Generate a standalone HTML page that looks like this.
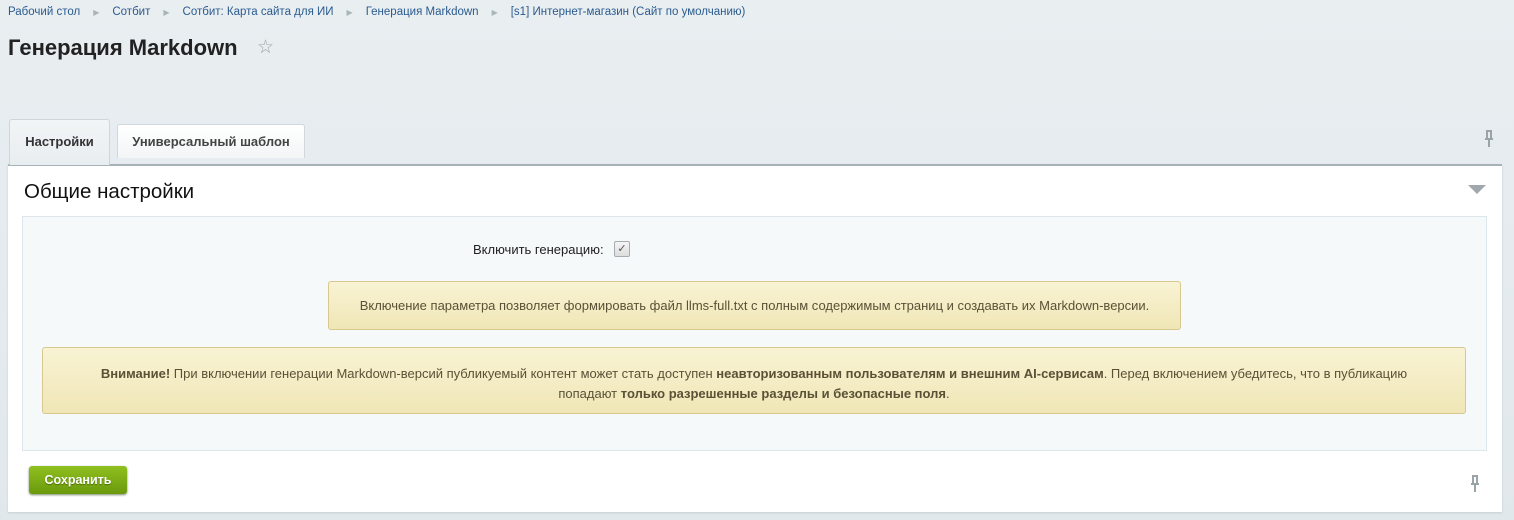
<!DOCTYPE html>
<html><head><meta charset="utf-8"><style>
body{margin:0;width:1514px;height:520px;background:linear-gradient(#e9eef1,#e1e8ec);font-family:"Liberation Sans",sans-serif;position:relative;overflow:hidden}
.a{position:absolute}
.bc{top:6px;left:8px;font-size:11.5px;color:#2a5b8f;white-space:nowrap;letter-spacing:0px}
.bc span.s{color:#a9b4bb;font-size:8px;margin:0 13px 0 13px}
h1{position:absolute;left:8px;top:35px;margin:0;font-size:22px;font-weight:bold;color:#222;letter-spacing:0px}
.tab{position:absolute;font-size:13px;font-weight:bold;color:#333;box-sizing:border-box;text-align:center}
.panel{left:8px;top:164px;width:1494px;height:348px;background:#fff;border-top:2px solid #a7b2b8;box-shadow:0 1px 2px #c5cfd4;box-sizing:border-box}
.inner{left:22px;top:216px;width:1465px;height:235px;background:#f5f9fa;border:1px solid #dce6eb;box-sizing:border-box}
.box{background:linear-gradient(#f8f3d4,#f0e6b6);border:1px solid #d6c88e;border-radius:3px;box-sizing:border-box;color:#5a5136;font-size:13px;text-align:center}
</style></head><body>
<div class="a bc">Рабочий стол<span class="s">▶</span>Сотбит<span class="s">▶</span>Сотбит: Карта сайта для ИИ<span class="s">▶</span>Генерация Markdown<span class="s">▶</span>[s1] Интернет-магазин (Сайт по умолчанию)</div>
<h1>Генерация Markdown</h1>
<div class="a" style="left:257px;top:36px;font-size:19px;color:#9aa4aa">☆</div>
<div class="tab" style="left:9px;top:119px;width:101px;height:46px;background:linear-gradient(#f2f5f6,#e8edf0);border:1px solid #cdd6db;border-bottom:none;border-radius:3px 3px 0 0;line-height:44px;z-index:2">Настройки</div>
<div class="tab" style="left:117px;top:124px;width:188px;height:34px;background:linear-gradient(#fff,#f3f5f6);border:1px solid #cfd8dc;border-bottom:none;border-radius:3px 3px 0 0;line-height:34px;color:#444">Универсальный шаблон</div>
<svg class="a" style="left:1483px;top:130px" width="12" height="18" viewBox="0 0 12 18"><path d="M3 1h6M4 1v7M8 1v7M2 9h8M6 9v8" stroke="#9aa3a8" stroke-width="2" fill="none"/></svg>
<div class="a panel"></div>
<div class="a" style="left:24px;top:180px;font-size:20.5px;color:#111">Общие настройки</div>
<svg class="a" style="left:1468px;top:185px" width="18" height="10"><path d="M0 0h18L9 9z" fill="#a0a8ad"/></svg>
<div class="a inner"></div>
<div class="a" style="left:473px;top:242px;font-size:13px;color:#222">Включить генерацию:</div>
<div class="a" style="left:614px;top:241px;width:14px;height:14px;border:1px solid #a5adb2;border-radius:2px;background:linear-gradient(#f5f5f5,#ddd);font-size:11px;line-height:14px;text-align:center;color:#555">✓</div>
<div class="a box" style="left:328px;top:281px;width:853px;height:49px;line-height:47px">Включение параметра позволяет формировать файл llms-full.txt с полным содержимым страниц и создавать их Markdown-версии.</div>
<div class="a box" style="left:42px;top:347px;width:1424px;height:67px;padding-top:16px;line-height:20px"><b>Внимание!</b> При включении генерации Markdown-версий публикуемый контент может стать доступен <b>неавторизованным пользователям и внешним AI-сервисам</b>. Перед включением убедитесь, что в публикацию<br>попадают <b>только разрешенные разделы и безопасные поля</b>.</div>
<div class="a" style="left:29px;top:466px;width:98px;height:28px;border-radius:3px;background:linear-gradient(#90bf1f,#6a9a0c);box-shadow:0 1px 2px #7a8a6a;color:#fff;font-weight:bold;font-size:12.5px;text-align:center;line-height:28px;text-shadow:0 1px 1px #4a6a05">Сохранить</div>
<svg class="a" style="left:1469px;top:475px" width="12" height="18" viewBox="0 0 12 18"><path d="M3 1h6M4 1v7M8 1v7M2 9h8M6 9v8" stroke="#9aa3a8" stroke-width="2" fill="none"/></svg>
</body></html>
